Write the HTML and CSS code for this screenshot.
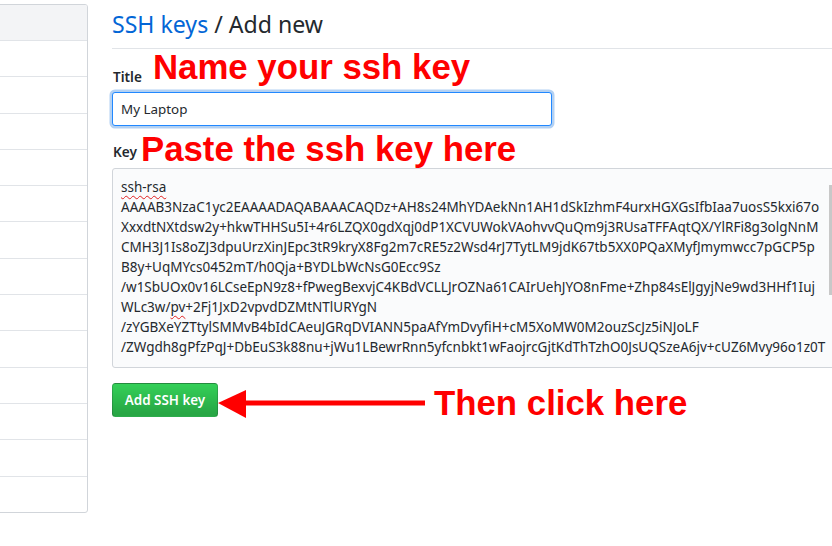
FILE: index.html
```html
<!DOCTYPE html>
<html lang="en">
<head>
<meta charset="utf-8">
<title>SSH keys / Add new</title>
<link rel="stylesheet" href="styles.css">
</head>
<body>
<div class="layout">
  <nav class="menu">
    <div class="menu-heading"></div>
    <div class="menu-item"></div>
    <div class="menu-item"></div>
    <div class="menu-item"></div>
    <div class="menu-item"></div>
    <div class="menu-item"></div>
    <div class="menu-item"></div>
    <div class="menu-item"></div>
    <div class="menu-item"></div>
    <div class="menu-item"></div>
    <div class="menu-item"></div>
    <div class="menu-item"></div>
    <div class="menu-item"></div>
    <div class="menu-item"></div>
  </nav>
  <main class="main">
    <div class="subhead">
      <h2 class="subhead-title"><a class="crumb" href="#">SSH keys</a> / Add new</h2>
    </div>
    <form class="form">
      <div class="label-row">
        <label class="label label-title" for="title">Title</label>
        <span class="note note-title">Name your ssh key</span>
      </div>
      <input class="input" id="title" type="text" value="My Laptop">
      <div class="label-row label-row-key">
        <label class="label label-key">Key</label>
        <span class="note note-key">Paste the ssh key here</span>
      </div>
      <div class="textarea" role="textbox" aria-multiline="true">
        <div class="line"><span class="spell">ssh-rsa</span></div>
        <div class="line">AAAAB3NzaC1yc2EAAAADAQABAAACAQDz+AH8s24MhYDAekNn1AH1dSkIzhmF4urxHGXGsIfbIaa7uosS5kxi67o</div>
        <div class="line">XxxdtNXtdsw2y+hkwTHHSu5I+4r6LZQX0gdXqj0dP1XCVUWokVAohvvQuQm9j3RUsaTFFAqtQX/YlRFi8g3olgNnM</div>
        <div class="line">CMH3J1Is8oZJ3dpuUrzXinJEpc3tR9kryX8Fg2m7cRE5z2Wsd4rJ7TytLM9jdK67tb5XX0PQaXMyfJmymwcc7pGCP5p</div>
        <div class="line">B8y+UqMYcs0452mT/h0Qja+BYDLbWcNsG0Ecc9Sz</div>
        <div class="line">/w1SbUOx0v16LCseEpN9z8+fPwegBexvjC4KBdVCLLJrOZNa61CAIrUehJYO8nFme+Zhp84sElJgyjNe9wd3HHf1Iuj</div>
        <div class="line">WLc3w/<span class="spell">pv</span>+2Fj1JxD2vpvdDZMtNTlURYgN</div>
        <div class="line">/zYGBXeYZTtylSMMvB4bIdCAeuJGRqDVIANN5paAfYmDvyfiH+cM5XoMW0M2ouzScJz5iNJoLF</div>
        <div class="line">/ZWgdh8gPfzPqJ+DbEuS3k88nu+jWu1LBewrRnn5yfcnbkt1wFaojrcGjtKdThTzhO0JsUQSzeA6jv+cUZ6Mvy96o1z0T</div>
        <div class="scroll-thumb"></div>
      </div>
      <div class="action-row">
        <button class="btn" type="button">Add SSH key</button>
        <svg class="arrow" width="207" height="28" viewBox="0 0 207 28" aria-hidden="true">
          <polygon points="0,13 28,0 28,28" fill="#ff0000"/>
          <rect x="27" y="10.5" width="180" height="5" fill="#ff0000"/>
        </svg>
        <span class="note note-click">Then click here</span>
      </div>
    </form>
  </main>
</div>
</body>
</html>
```
FILE: styles.css
```css
html, body {
  margin: 0;
  padding: 0;
  background: #ffffff;
  overflow: hidden;
}

body {
  width: 832px;
  height: 546px;
  font-family: "Noto Sans", "Segoe UI", "Liberation Sans", sans-serif;
  font-size: 13.4px;
  color: #24292e;
}

.layout {
  display: flex;
  align-items: flex-start;
  gap: 24px;
}

.menu {
  flex: 0 0 240px;
  margin-left: -152px;
  margin-top: 4px;
  border: 1px solid #d1d5da;
  border-radius: 3px;
  background: #ffffff;
  box-sizing: border-box;
  overflow: hidden;
}

.menu-heading {
  height: 35px;
  background: #f3f4f6;
}

.menu-item {
  height: 36.31px;
  box-sizing: border-box;
  border-top: 1px solid #e1e4e8;
}

.main {
  flex: 0 0 760px;
}

.subhead {
  padding: 6px 0 6px;
  border-bottom: 1px solid #e1e4e8;
}

.subhead-title {
  margin: 0;
  font-size: 23.1px;
  line-height: 36px;
  font-weight: 400;
  color: #24292e;
}

.crumb {
  color: #0366d6;
  text-decoration: none;
}

.form {
  display: flex;
  flex-direction: column;
  align-items: flex-start;
}

.label-row {
  display: flex;
  align-items: flex-end;
}

.label-row-key {
  align-items: flex-start;
}

.label {
  font-weight: 600;
  font-size: 13.6px;
  line-height: 20px;
  padding-left: 1px;
}

.label-title {
  margin-bottom: -2px;
}

.label-key {
  margin-top: 16px;
}

.note {
  font-family: "Liberation Sans", Arial, sans-serif;
  font-weight: 700;
  color: #ff0000;
  font-size: 34.8px;
  line-height: 36px;
  white-space: nowrap;
}

.note-title {
  margin-left: 11px;
}

.note-key {
  margin-left: 4px;
  margin-top: 5px;
}

.input {
  margin-top: 7px;
  width: 440px;
  height: 34px;
  box-sizing: border-box;
  padding: 6px 8px;
  font: inherit;
  line-height: 20px;
  color: #24292e;
  background: #ffffff;
  border: 1px solid #2188ff;
  border-radius: 3px;
  outline: none;
  box-shadow: 0 0 0 2.5px rgba(3, 102, 214, 0.3);
}

.textarea {
  position: relative;
  margin-top: 1px;
  width: 760px;
  height: 200px;
  box-sizing: border-box;
  padding: 8px 8px;
  background: #fafbfc;
  border: 1px solid #d1d5da;
  border-radius: 3px;
  font-size: 13.5px;
  line-height: 20px;
  color: #24292e;
  overflow: hidden;
}

.line {
  white-space: pre;
  height: 20px;
}

.spell {
  text-decoration: underline wavy #e02020;
  text-decoration-thickness: 1px;
  text-underline-offset: 3px;
}

.scroll-thumb {
  position: absolute;
  left: 716px;
  top: 16px;
  width: 3px;
  height: 110px;
  background: #c8c8c8;
}

.action-row {
  margin-top: 15px;
  display: flex;
  align-items: flex-start;
}

.btn {
  height: 34px;
  width: 106px;
  box-sizing: border-box;
  padding: 6px 0;
  font: inherit;
  font-weight: 600;
  line-height: 20px;
  white-space: nowrap;
  text-align: center;
  color: #ffffff;
  background-image: linear-gradient(-180deg, #34d058 0%, #28a745 90%);
  border: 1px solid rgba(27, 31, 35, 0.2);
  border-radius: 3.5px;
}

.arrow {
  display: block;
  margin-top: 7px;
}

.note-click {
  margin-left: 9px;
  margin-top: 2px;
}
```
